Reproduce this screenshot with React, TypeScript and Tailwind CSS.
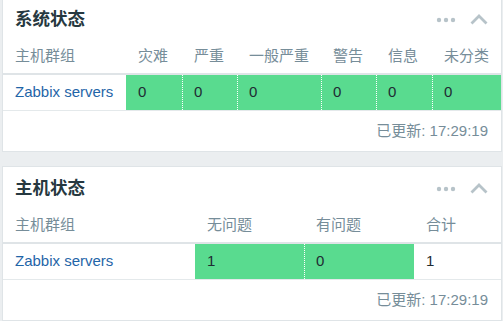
const font = "font-['Liberation_Sans','Noto_Sans_CJK_SC',sans-serif]";

const WidgetHeader = ({ title }: { title: string }) => (
  <div className="flex h-[41px] items-center justify-between pl-[12px] pr-[13px]">
    <h4 className="mt-[2px] text-[17.5px] font-bold text-[#263840]">{title}</h4>
    <div className="flex items-center gap-[14px]">
      <svg width="20" height="6" viewBox="0 0 20 6" className="mt-[2px]">
        <circle cx="3" cy="3" r="2.2" fill="#b7c3c9" />
        <circle cx="10" cy="3" r="2.2" fill="#b7c3c9" />
        <circle cx="17" cy="3" r="2.2" fill="#b7c3c9" />
      </svg>
      <svg width="18" height="12" viewBox="0 0 18 12">
        <path d="M1.5 10.5 L9 3 L16.5 10.5" fill="none" stroke="#b7c3c9" strokeWidth="2.8" />
      </svg>
    </div>
  </div>
);

type Col = { label: string; width: string; value?: string };

const StatusTable = ({ cols, total }: { cols: Col[]; total?: string }) => (
  <div>
    <div className="flex h-[36px] items-center border-b-2 border-[#dfe4e7] text-[15px] text-[#768d99]">
      {cols.map(c => (
        <div key={c.label} className={`${c.width} pl-[12px]`}>{c.label}</div>
      ))}
      {total !== undefined && <div className="flex-1 pl-[12px]">合计</div>}
    </div>
    <div className="flex h-[36px] border-b border-[#e4e9eb] text-[15px]">
      {cols.map((c, i) =>
        i === 0 ? (
          <div key={c.label} className={`${c.width} flex items-center pl-[12px] text-[#1f65a8]`}>Zabbix servers</div>
        ) : (
          <div
            key={c.label}
            className={`${c.width} flex items-center bg-[#59db8f] text-[#1f2c33] ${i > 1 ? 'border-l border-dotted border-white pl-[11px]' : 'pl-[12px]'}`}
          >
            {c.value}
          </div>
        )
      )}
      {total !== undefined && <div className="flex flex-1 items-center pl-[12px] text-[#1f2c33]">{total}</div>}
    </div>
  </div>
);

const Footer = () => (
  <div className="flex h-[40px] items-center justify-end pr-[13px] text-[15px] text-[#768d99]">已更新: 17:29:19</div>
);

export default function App() {
  const systemCols: Col[] = [
    { label: '主机群组', width: 'w-[123px]' },
    { label: '灾难', width: 'w-[56px]', value: '0' },
    { label: '严重', width: 'w-[55px]', value: '0' },
    { label: '一般严重', width: 'w-[84px]', value: '0' },
    { label: '警告', width: 'w-[55px]', value: '0' },
    { label: '信息', width: 'w-[56px]', value: '0' },
    { label: '未分类', width: 'flex-1', value: '0' },
  ];
  const hostCols: Col[] = [
    { label: '主机群组', width: 'w-[192px]' },
    { label: '无问题', width: 'w-[109px]', value: '1' },
    { label: '有问题', width: 'w-[110px]', value: '0' },
  ];

  return (
    <div className={`min-h-screen overflow-hidden bg-[#ebeef0] pl-[2px] pr-[1px] ${font}`}>
      <div className="-mt-[3px] flex flex-col gap-[14px]">
        <div className="border border-[#dfe4e7] bg-white">
          <WidgetHeader title="系统状态" />
          <StatusTable cols={systemCols} />
          <Footer />
        </div>
        <div className="border border-[#dfe4e7] bg-white">
          <WidgetHeader title="主机状态" />
          <StatusTable cols={hostCols} total="1" />
          <Footer />
        </div>
      </div>
    </div>
  );
}
